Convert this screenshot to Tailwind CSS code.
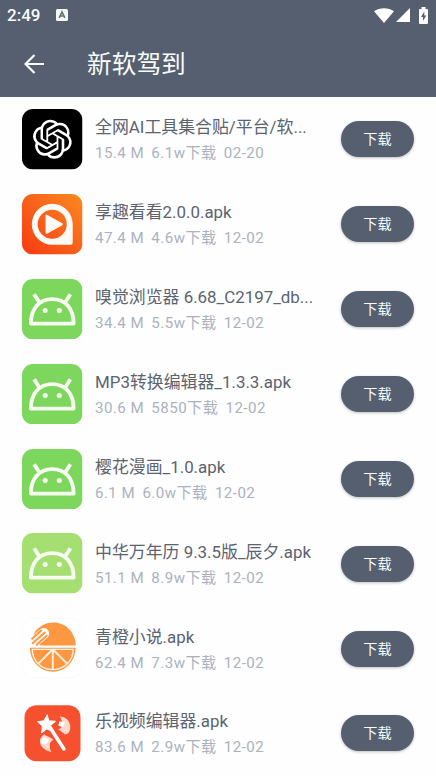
<!DOCTYPE html>
<html lang="zh-CN">
<head>
<meta charset="utf-8">
<title>新软驾到</title>
<script src="https://cdn.jsdelivr.net/npm/@tailwindcss/browser@4"></script>
</head>
<body class="w-[436px] h-[776px] overflow-hidden bg-[#fefefe] font-[Roboto,'Noto_Sans_CJK_SC',sans-serif]">
<svg class="absolute size-0">
  <defs><linearGradient id="pg" x1="1" y1="0" x2="0" y2="1"><stop offset="0" stop-color="#fb8a1e"/><stop offset=".5" stop-color="#f9611a"/><stop offset="1" stop-color="#f83a12"/></linearGradient></defs>
  <symbol id="openai" viewBox="0 0 60 60">
    <rect width="60" height="60" rx="11" fill="#000"/>
    <path transform="translate(10.8 10.6) scale(1.61)" fill="#fff" d="M22.2819 9.8211a5.9847 5.9847 0 0 0-.5157-4.9108 6.0462 6.0462 0 0 0-6.5098-2.9A6.0651 6.0651 0 0 0 4.9807 4.1818a5.9847 5.9847 0 0 0-3.9977 2.9 6.0462 6.0462 0 0 0 .7427 7.0966 5.98 5.98 0 0 0 .511 4.9107 6.051 6.051 0 0 0 6.5146 2.9001A5.9847 5.9847 0 0 0 13.2599 24a6.0557 6.0557 0 0 0 5.7718-4.2058 5.9894 5.9894 0 0 0 3.9977-2.9001 6.0557 6.0557 0 0 0-.7475-7.0729zm-9.022 12.6081a4.4755 4.4755 0 0 1-2.8764-1.0408l.1419-.0804 4.7783-2.7582a.7948.7948 0 0 0 .3927-.6813v-6.7369l2.02 1.1686a.071.071 0 0 1 .038.052v5.5826a4.504 4.504 0 0 1-4.4945 4.4944zm-9.6607-4.1254a4.4708 4.4708 0 0 1-.5346-3.0137l.142.0852 4.783 2.7582a.7712.7712 0 0 0 .7806 0l5.8428-3.3685v2.3324a.0804.0804 0 0 1-.0332.0615L9.74 19.9502a4.4992 4.4992 0 0 1-6.1408-1.6464zM2.3408 7.8956a4.485 4.485 0 0 1 2.3655-1.9728V11.6a.7664.7664 0 0 0 .3879.6765l5.8144 3.3543-2.0201 1.1685a.0757.0757 0 0 1-.071 0l-4.8303-2.7865A4.504 4.504 0 0 1 2.3408 7.872zm16.5963 3.8558L13.1038 8.364 15.1192 7.2a.0757.0757 0 0 1 .071 0l4.8303 2.7913a4.4944 4.4944 0 0 1-.6765 8.1042v-5.6772a.79.79 0 0 0-.407-.667zm2.0107-3.0231l-.142-.0852-4.7735-2.7818a.7759.7759 0 0 0-.7854 0L9.409 9.2297V6.8974a.0662.0662 0 0 1 .0284-.0615l4.8303-2.7866a4.4992 4.4992 0 0 1 6.6802 4.66zM8.3065 12.863l-2.02-1.1638a.0804.0804 0 0 1-.038-.0567V6.0742a4.4992 4.4992 0 0 1 7.3757-3.4537l-.142.0805L8.704 5.459a.7948.7948 0 0 0-.3927.6813zm1.0976-2.3654l2.602-1.4998 2.6069 1.4998v2.9994l-2.5974 1.4997-2.6067-1.4997Z"/>
  </symbol>
  <symbol id="player" viewBox="0 0 60 60">
    <rect width="60" height="60" rx="11" fill="url(#pg)"/>
    <path fill="#fffaf5" fill-rule="evenodd" d="M30 9.700a20.300 20.300 0 0 1 20.300 20.300V48a2.300 2.300 0 0 1-2.300 2.300H30A20.300 20.300 0 0 1 30 9.700zM30 15.600a14.400 14.400 0 1 0 0 28.800a14.400 14.400 0 0 0 0-28.800z"/>
    <path fill="#fffaf5" stroke="#fffaf5" stroke-width="2" stroke-linejoin="round" d="M24.300 21.500V38.500L39.500 30z"/>
  </symbol>
  <symbol id="droid" viewBox="0 0 60 60">
    <rect width="60" height="60" rx="11" fill="currentColor"/>
    <path fill="none" stroke="#f7fdf0" stroke-width="3.800" stroke-linejoin="round" d="M8.800 44.200C8.800 29 17.500 19.900 30 19.900S51.200 29 51.200 44.200z"/>
    <path stroke="#f7fdf0" stroke-width="3.800" d="M17.200 23.400L12 15.200M42.800 23.400L48 15.200"/>
    <circle cx="23" cy="31.300" r="2.500" fill="#f7fdf0"/><circle cx="37" cy="31.300" r="2.500" fill="#f7fdf0"/>
  </symbol>
  <symbol id="orange" viewBox="0 0 60 60">
    <rect x=".5" y=".5" width="59" height="59" rx="11" fill="#fff" stroke="#fafafa"/>
    <path fill="#fd9742" d="M13.500 13C18 7.500 24 4.500 31 4.500C43.500 4.500 53 14.500 53.300 27.300H20L9.500 26C9.500 21 11 16.500 13.500 13z"/>
    <path fill="none" stroke="#fff" stroke-width="11" stroke-linecap="round" d="M8 27L21.500 15.500"/>
    <path fill="none" stroke="#fd9742" stroke-width="2" stroke-linecap="round" d="M10 20.500L19 12.500M10.500 25L22.500 14.500M14.500 26.500L24.500 17.500"/>
    <path fill="#fd9742" d="M7.800 29.500H53.200A22.700 23.800 0 0 1 7.800 29.500z"/>
    <path fill="none" stroke="#fff1e2" stroke-width="1.300" d="M10.200 31.200A20.300 20 0 0 0 50.800 31.200z"/>
    <path stroke="#fff1e2" stroke-width="1.900" d="M30.500 32V51M30.500 31L16 45.500M30.500 31L45 45.500"/>
  </symbol>
  <symbol id="wand" viewBox="0 0 60 60">
    <rect x="2.500" y="2.300" width="55.500" height="55.500" rx="12" fill="#f5512e"/>
    <path fill="#ffd9cc" d="M37.500 13.500C43 13.500 48 18 48 24C48 28 45.500 31.200 42.500 31.200C41 29.500 39.500 28.500 36 26C39 25 40 23.500 40 21C40 18.500 39 16.500 37.500 13.500z"/>
    <path fill="#ffd9cc" d="M22 31C25 33.500 30 34.500 31 36.500C28.500 38 27.500 39.500 27.500 42C27.500 44.500 28 47 29 48.500C22.500 47.500 17.700 43 17.800 37.500C18 34.500 20 32.500 22 31z"/>
    <path fill="#fff" d="M37 18L42.500 19L40.500 24L36 22.500zM20.500 34L26.500 36L24.500 41L18.500 40z"/>
    <path stroke="#fff" stroke-width="3.600" stroke-linecap="round" d="M28 24.500L41.500 45.500"/>
    <path fill="#fff" stroke="#fff" stroke-width="1" stroke-linejoin="round" d="M25 11.800L26.500 17.700L33 18.200L28.200 22.200L30 28L24.400 25.500L19.500 29.500L20.200 22.800L15.500 18.500L21.800 17.500z"/>
  </symbol>
</svg>

<header class="h-[97px] bg-[#555f6f] text-[#f8fcfc]">
  <div class="flex h-[30px] items-center pl-[7px] pr-[8px]">
    <span class="w-[49px] text-[17px] leading-[30px] font-medium">2:49</span>
    <svg class="size-[12px]" viewBox="0 0 12 12"><rect width="12" height="12" rx="1.500" fill="#f4faf5"/><path d="M3.200 8.800L6 2.800L8.800 8.800M4.200 7H7.800" fill="none" stroke="#6a7370" stroke-width="1.600"/></svg>
    <div class="ml-auto flex items-center">
      <svg class="h-[15px] w-[20px]" viewBox="0 0 20 15"><path fill="#fff" d="M0 3.300C5.500-.9 14.500-.9 20 3.300L10 15z"/></svg>
      <svg class="ml-[2px] h-[14px] w-[14px]" viewBox="0 0 14 14"><path fill="#fff" d="M14 0V14H0z"/></svg>
      <svg class="ml-[9px] h-[17px] w-[9px]" viewBox="0 0 9 17"><path fill="#fff" d="M2.500 0h4v2H8a1 1 0 0 1 1 1V16a1 1 0 0 1-1 1H1a1 1 0 0 1-1-1V3a1 1 0 0 1 1-1h1.500z"/><path fill="#555f6f" d="M5.300 4.500L2 10h2v4L7.200 8.400H5.300z"/></svg>
    </div>
  </div>
  <div class="flex h-[67px] items-center pl-[24px]">
    <svg class="size-[20px]" viewBox="0 0 20 20" fill="none" stroke="#f8fcfc" stroke-width="2.200"><path d="M10.500 1L1.500 10L10.500 19M1.500 10H20"/></svg>
    <h1 class="ml-[43px] pt-[2px] text-[24.700px] leading-[30px]">新软驾到</h1>
  </div>
</header>

<main id="list"></main>

<script>
const apps = [
  ['openai', '', '全网AI工具集合贴/平台/软...', '15.4 M', '6.1w下载', '02-20'],
  ['player', '', '享趣看看2.0.0.apk', '47.4 M', '4.6w下载', '12-02'],
  ['droid', 'text-[#7dd75c]', '嗅觉浏览器 6.68_C2197_db...', '34.4 M', '5.5w下载', '12-02'],
  ['droid', 'text-[#7dd75c]', 'MP3转换编辑器_1.3.3.apk', '30.6 M', '5850下载', '12-02'],
  ['droid', 'text-[#7dd75c]', '樱花漫画_1.0.apk', '6.1 M', '6.0w下载', '12-02'],
  ['droid', 'text-[#a5df72]', '中华万年历 9.3.5版_辰夕.apk', '51.1 M', '8.9w下载', '12-02'],
  ['orange', '', '青橙小说.apk', '62.4 M', '7.3w下载', '12-02'],
  ['wand', '', '乐视频编辑器.apk', '83.6 M', '2.9w下载', '12-02'],
];
document.getElementById('list').innerHTML = apps.map(([icon, tint, name, size, count, date]) => `
  <article class="flex h-[84.860px] items-center pl-[22px] pr-[22px]">
    <svg class="size-[60.500px] shrink-0 ${tint}"><use href="#${icon}"/></svg>
    <div class="ml-[12.500px] w-[232px] whitespace-nowrap pt-[2px]">
      <h2 class="h-[26px] text-[16.900px] leading-[24px] text-[#5b6370]">${name}</h2>
      <p class="flex h-[24px] gap-[7.300px] text-[15.100px] leading-[25.500px] tracking-[0.450px] text-[#abb2bf]"><span>${size}</span><span>${count}</span><span>${date}</span></p>
    </div>
    <button class="ml-auto h-[36px] w-[73px] shrink-0 rounded-full bg-[#555f6f] pt-[1px] text-[14.200px] leading-[35px] text-[#f8fcfc] shadow-[0_1px_3px_rgba(0,0,0,0.25)]">下载</button>
  </article>`).join('');
</script>
</body>
</html>
